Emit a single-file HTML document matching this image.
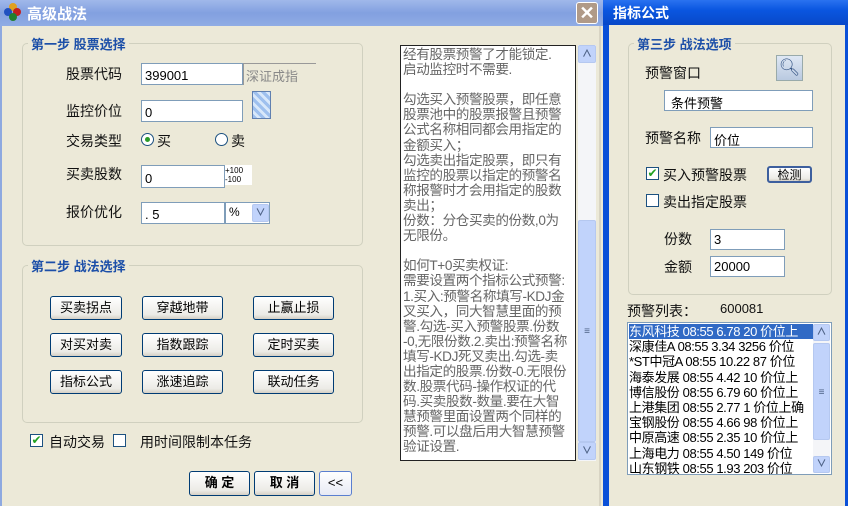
<!DOCTYPE html>
<html><head><meta charset="utf-8"><style>
*{margin:0;padding:0;box-sizing:border-box}
body{width:848px;height:506px;overflow:hidden;background:#ece9d8;position:relative;font-family:"Liberation Sans","Noto Sans CJK SC","WenQuanYi Zen Hei",sans-serif;font-size:13px;color:#000}
.a{position:absolute}
.lbl{position:absolute;font-size:14px;white-space:nowrap;color:#111}
.grp{position:absolute;border:1px solid #d0d0bf;border-radius:5px}
.gt{position:absolute;background:#ece9d8;color:#1c4fa8;font-weight:bold;font-size:13px;padding:0 3px;white-space:nowrap}
.inp{position:absolute;background:#fff;border:1px solid #7f9db9;font-size:13px;padding:2px 3px;white-space:nowrap;overflow:hidden}
.btn{position:absolute;border:1px solid #003c74;border-radius:3px;background:linear-gradient(#fff,#ecebe6 80%,#d6d0c5);font-size:13px;text-align:center;line-height:22px}
.cb{position:absolute;width:13px;height:13px;border:1px solid #1c5180;background:#fff}
.sb{position:absolute;background:#f4f5f8}
.sbb{position:absolute;background:#c1d3fb;border:1px solid #b5c8f0;border-radius:2px;color:#4d6185;font-size:10px;text-align:center;font-weight:bold}
</style></head><body>
<div class="a" style="left:0;top:0;width:603px;height:26px;background:linear-gradient(#a0b8ea,#82a0e0 50%,#90ace4)"></div>
<div class="a" style="left:4px;top:3px;width:18px;height:18px">
<div class="a" style="left:5px;top:0;width:8px;height:8px;border-radius:50%;background:#e0a020"></div>
<div class="a" style="left:0;top:5px;width:8px;height:8px;border-radius:50%;background:#2050c0"></div>
<div class="a" style="left:9px;top:5px;width:8px;height:8px;border-radius:50%;background:#c02020"></div>
<div class="a" style="left:5px;top:10px;width:8px;height:8px;border-radius:50%;background:#208030"></div></div>
<div class="lbl" style="left:27px;top:3px;color:#fff;font-size:15px;font-weight:bold">高级战法</div>
<div class="a" style="left:576px;top:2px;width:22px;height:22px;border-radius:3px;background:#b09a88;border:1px solid #fff;color:#fff;font-size:18px;text-align:center;line-height:20px;font-weight:bold">✕</div>
<div class="a" style="left:0;top:26px;width:2px;height:480px;background:#8ea9e0"></div>
<div class="a" style="left:599px;top:26px;width:2px;height:480px;background:#d8d4c4"></div>

<div class="grp" style="left:22px;top:43px;width:341px;height:203px"></div>
<div class="gt" style="left:28px;top:34px">第一步 股票选择</div>
<div class="lbl" style="left:66px;top:64px">股票代码</div>
<div class="inp" style="left:141px;top:63px;width:102px;height:22px;padding-top:4px">399001</div>
<div class="a" style="left:243px;top:63px;width:73px;height:22px;border-top:1px solid #999;border-left:1px solid #999;background:#ece9d8;color:#888;font-size:13px;padding:2px 2px">深证成指</div>
<div class="lbl" style="left:66px;top:101px">监控价位</div>
<div class="inp" style="left:141px;top:100px;width:102px;height:22px;padding-top:4px">0</div>
<div class="a" style="left:252px;top:91px;width:19px;height:28px;background:repeating-linear-gradient(45deg,#9ec0ee 0 3px,#d8e8fa 3px 6px);border:1px solid #6080b0"></div>
<div class="lbl" style="left:66px;top:131px">交易类型</div>
<div class="a" style="left:141px;top:133px;width:13px;height:13px;border-radius:50%;border:1px solid #1c5180;background:#fff"><div class="a" style="left:3px;top:3px;width:5px;height:5px;border-radius:50%;background:#2a9a2a"></div></div>
<div class="lbl" style="left:157px;top:131px">买</div>
<div class="a" style="left:215px;top:133px;width:13px;height:13px;border-radius:50%;border:1px solid #1c5180;background:#fff"></div>
<div class="lbl" style="left:231px;top:131px">卖</div>
<div class="lbl" style="left:66px;top:164px">买卖股数</div>
<div class="inp" style="left:141px;top:165px;width:84px;height:23px;padding-top:5px">0</div>
<div class="a" style="left:225px;top:165px;width:27px;height:20px;background:#fff;font-size:8px;line-height:9px;padding-top:1px">+100<br>-100</div>
<div class="lbl" style="left:66px;top:202px">报价优化</div>
<div class="inp" style="left:141px;top:202px;width:84px;height:22px;padding-top:4px">. 5</div>
<div class="a" style="left:225px;top:202px;width:45px;height:22px;background:#fff;border:1px solid #7f9db9;font-size:12px;padding:2px 3px">%</div>
<div class="sbb" style="left:252px;top:204px;width:17px;height:18px;line-height:17px">&#x2228;</div>

<div class="grp" style="left:22px;top:265px;width:341px;height:158px"></div>
<div class="gt" style="left:28px;top:256px">第二步 战法选择</div>
<div class="btn" style="left:50px;top:296px;width:72px;height:24px">买卖拐点</div>
<div class="btn" style="left:142px;top:296px;width:81px;height:24px">穿越地带</div>
<div class="btn" style="left:253px;top:296px;width:81px;height:24px">止赢止损</div>
<div class="btn" style="left:50px;top:333px;width:72px;height:24px">对买对卖</div>
<div class="btn" style="left:142px;top:333px;width:81px;height:24px">指数跟踪</div>
<div class="btn" style="left:253px;top:333px;width:81px;height:24px">定时买卖</div>
<div class="btn" style="left:50px;top:370px;width:72px;height:24px">指标公式</div>
<div class="btn" style="left:142px;top:370px;width:81px;height:24px">涨速追踪</div>
<div class="btn" style="left:253px;top:370px;width:81px;height:24px">联动任务</div>

<div class="cb" style="left:30px;top:434px;color:#21a121;font-size:12px;line-height:11px;text-align:center">✔</div>
<div class="lbl" style="left:49px;top:432px">自动交易</div>
<div class="cb" style="left:113px;top:434px"></div>
<div class="lbl" style="left:140px;top:432px">用时间限制本任务</div>

<div class="btn" style="left:189px;top:471px;width:61px;height:25px;font-weight:bold">确 定</div>
<div class="btn" style="left:254px;top:471px;width:61px;height:25px;font-weight:bold">取 消</div>
<div class="btn" style="left:319px;top:471px;width:33px;height:25px;border-color:#5a7fd0;background:linear-gradient(#fff,#e8eaf4)">&lt;&lt;</div>

<div class="a" style="left:400px;top:45px;width:176px;height:416px;background:#fff;border:1px solid #222;color:#666;font-size:13.6px;line-height:15.1px;padding:1px 2px;letter-spacing:-0.4px;white-space:nowrap;overflow:hidden">经有股票预警了才能锁定.<br>启动监控时不需要.<br><br>勾选买入预警股票，即任意<br>股票池中的股票报警且预警<br>公式名称相同都会用指定的<br>金额买入；<br>勾选卖出指定股票，即只有<br>监控的股票以指定的预警名<br>称报警时才会用指定的股数<br>卖出；<br>份数：分仓买卖的份数,0为<br>无限份。<br><br>如何T+0买卖权证:<br>需要设置两个指标公式预警:<br>1.买入:预警名称填写-KDJ金<br>叉买入，同大智慧里面的预<br>警.勾选-买入预警股票.份数<br>-0,无限份数.2.卖出:预警名称<br>填写-KDJ死叉卖出.勾选-卖<br>出指定的股票.份数-0.无限份<br>数.股票代码-操作权证的代<br>码.买卖股数-数量.要在大智<br>慧预警里面设置两个同样的<br>预警.可以盘后用大智慧预警<br>验证设置.</div>
<div class="sb" style="left:578px;top:45px;width:18px;height:416px"></div>
<div class="sbb" style="left:578px;top:45px;width:18px;height:18px;line-height:17px">&#x2227;</div>
<div class="sbb" style="left:578px;top:220px;width:18px;height:222px;line-height:222px">≡</div>
<div class="sbb" style="left:578px;top:442px;width:18px;height:18px;line-height:17px">&#x2228;</div>

<div class="a" style="left:603px;top:0;width:245px;height:506px;background:#0a50d8"></div>
<div class="a" style="left:603px;top:0;width:245px;height:25px;background:linear-gradient(#2a72f0,#0a56e0 40%,#0848c8)"></div>
<div class="lbl" style="left:613px;top:3px;color:#fff;font-size:14px;font-weight:bold">指标公式</div>
<div class="a" style="left:609px;top:25px;width:236px;height:481px;background:#ece9d8"></div>

<div class="grp" style="left:628px;top:43px;width:204px;height:252px"></div>
<div class="gt" style="left:634px;top:34px">第三步 战法选项</div>
<div class="lbl" style="left:645px;top:63px">预警窗口</div>
<div class="a" style="left:776px;top:55px;width:27px;height:26px;background:linear-gradient(#dfe8f4,#b9c9e0);border:1px solid #9aa;color:#305080;font-size:17px;text-align:center;line-height:24px">&#x1F50D;&#xFE0E;</div>
<div class="inp" style="left:664px;top:90px;width:149px;height:21px;padding-left:6px">条件预警</div>
<div class="lbl" style="left:645px;top:128px">预警名称</div>
<div class="inp" style="left:710px;top:127px;width:103px;height:21px">价位</div>
<div class="cb" style="left:646px;top:167px;color:#21a121;font-size:12px;line-height:11px;text-align:center">✔</div>
<div class="lbl" style="left:663px;top:165px">买入预警股票</div>
<div class="btn" style="left:767px;top:166px;width:45px;height:17px;line-height:15px;border:2px solid #3d5f9e;font-size:12px">检测</div>
<div class="cb" style="left:646px;top:194px"></div>
<div class="lbl" style="left:663px;top:192px">卖出指定股票</div>
<div class="lbl" style="left:664px;top:229px">份数</div>
<div class="inp" style="left:710px;top:229px;width:75px;height:21px">3</div>
<div class="lbl" style="left:664px;top:257px">金额</div>
<div class="inp" style="left:710px;top:256px;width:75px;height:21px">20000</div>

<div class="lbl" style="left:627px;top:301px">预警列表：</div>
<div class="lbl" style="left:720px;top:301px;font-size:13px">600081</div>
<div class="a" style="left:627px;top:322px;width:205px;height:153px;background:#fff;border:1px solid #7f9db9"></div>
<div class="a" style="left:629px;top:324px;width:184px;height:150px;font-size:13px;line-height:15.2px;white-space:nowrap;overflow:hidden;letter-spacing:-0.4px">
<div style="background:#316ac5;color:#fff">东风科技 08:55 6.78 20 价位上</div>
<div>深康佳A 08:55 3.34 3256 价位</div>
<div>*ST中冠A 08:55 10.22 87 价位</div>
<div>海泰发展 08:55 4.42 10 价位上</div>
<div>博信股份 08:55 6.79 60 价位上</div>
<div>上港集团 08:55 2.77 1 价位上确</div>
<div>宝钢股份 08:55 4.66 98 价位上</div>
<div>中原高速 08:55 2.35 10 价位上</div>
<div>上海电力 08:55 4.50 149 价位</div>
<div>山东钢铁 08:55 1.93 203 价位</div>
</div>
<div class="sb" style="left:813px;top:324px;width:17px;height:149px"></div>
<div class="sbb" style="left:813px;top:324px;width:17px;height:17px;line-height:16px">&#x2227;</div>
<div class="sbb" style="left:813px;top:343px;width:17px;height:97px;line-height:97px">≡</div>
<div class="sbb" style="left:813px;top:456px;width:17px;height:17px;line-height:16px">&#x2228;</div>
</body></html>
